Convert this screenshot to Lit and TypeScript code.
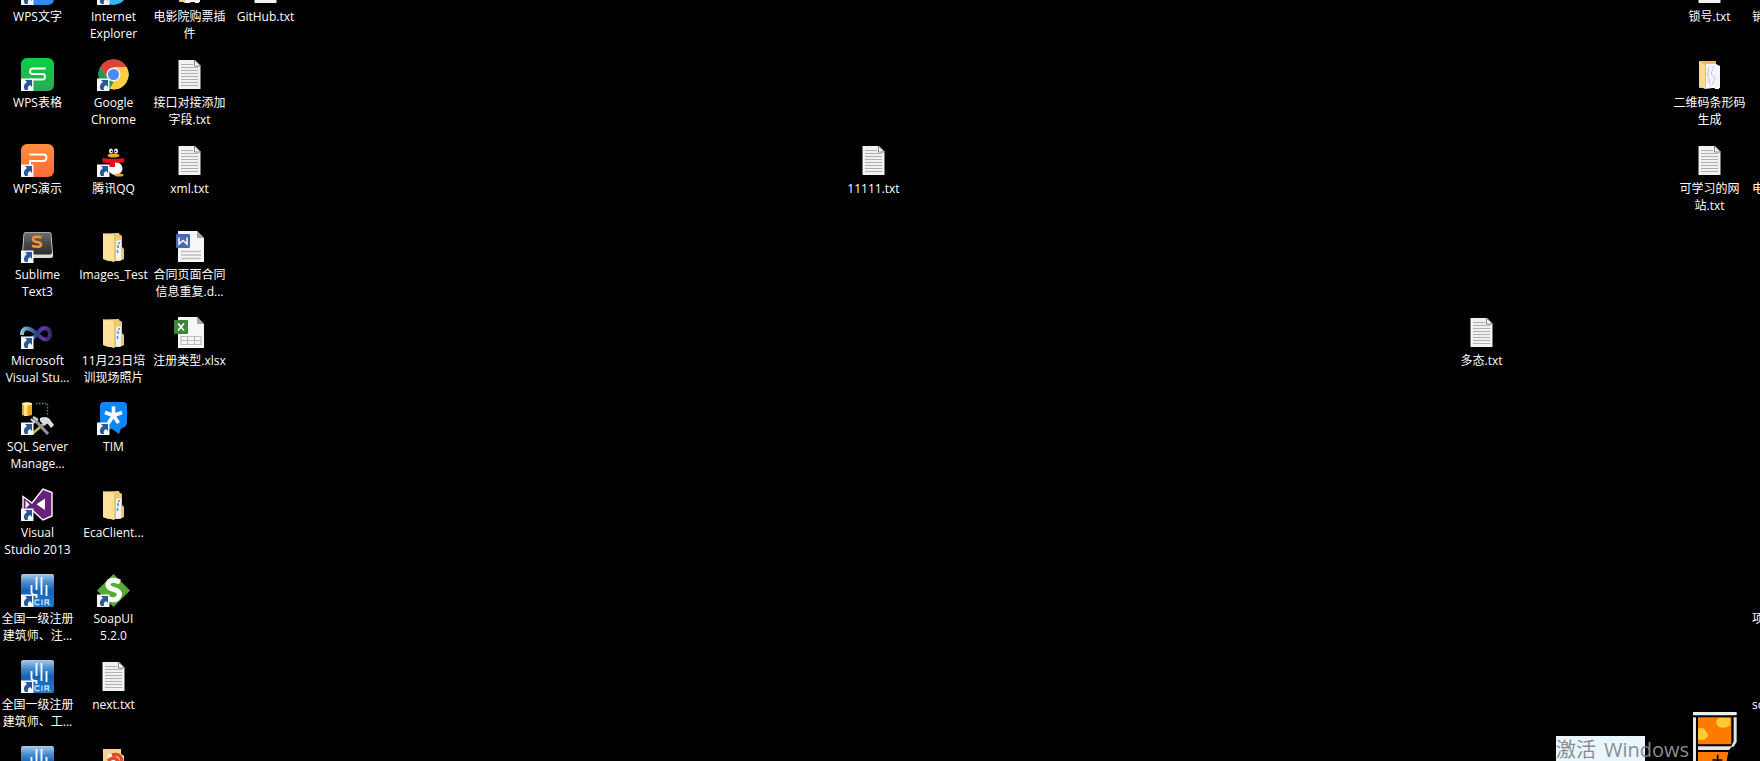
import { LitElement, html, svg, css } from "lit";
import { customElement, property } from "lit/decorators.js";
import { classMap } from "lit/directives/class-map.js";

interface Item {
  col: number;
  row: number;
  icon: string;
  lines: string[];
  shortcut?: boolean;
}

const item = (col: number, row: number, icon: string, lines: string, shortcut = false): Item => ({
  col,
  row,
  icon,
  lines: lines ? lines.split("|") : [],
  shortcut,
});

const LAST_COL = 24;

const ITEMS: Item[] = [
  item(1, 1, "writer", "WPS文字", true),
  item(1, 2, "sheets", "WPS表格", true),
  item(1, 3, "slides", "WPS演示", true),
  item(1, 4, "sublime", "Sublime|Text3", true),
  item(1, 5, "infinity", "Microsoft|Visual Stu...", true),
  item(1, 6, "sql", "SQL Server|Manage...", true),
  item(1, 7, "vs", "Visual|Studio 2013", true),
  item(1, 8, "cir", "全国一级注册|建筑师、注...", true),
  item(1, 9, "cir", "全国一级注册|建筑师、工...", true),
  item(1, 10, "cir", "", true),
  item(2, 1, "ie", "Internet|Explorer", true),
  item(2, 2, "chrome", "Google|Chrome", true),
  item(2, 3, "qq", "腾讯QQ", true),
  item(2, 4, "folder", "Images_Test"),
  item(2, 5, "folder", "11月23日培|训现场照片"),
  item(2, 6, "tim", "TIM", true),
  item(2, 7, "folder", "EcaClient..."),
  item(2, 8, "soap", "SoapUI|5.2.0", true),
  item(2, 9, "txt", "next.txt"),
  item(2, 10, "folderRed", ""),
  item(3, 1, "papers", "电影院购票插|件"),
  item(3, 2, "txt", "接口对接添加|字段.txt"),
  item(3, 3, "txt", "xml.txt"),
  item(3, 4, "word", "合同页面合同|信息重复.d..."),
  item(3, 5, "excel", "注册类型.xlsx"),
  item(4, 1, "txt", "GitHub.txt"),
  item(12, 3, "txt", "11111.txt"),
  item(20, 5, "txt", "多态.txt"),
  item(23, 1, "txt", "锁号.txt"),
  item(23, 2, "papers", "二维码条形码|生成"),
  item(23, 3, "txt", "可学习的网|站.txt"),
  item(LAST_COL, 1, "txt", "销"),
  item(LAST_COL, 3, "txt", "电"),
  item(LAST_COL, 8, "folder", "项"),
  item(LAST_COL, 9, "txt", "so"),
];

const ICONS: Record<string, unknown> = {
  writer: svg`<rect width="33" height="33" rx="6" fill="#2f8df5"/>`,
  sheets: svg`
    <defs><linearGradient id="g" x2="0" y2="1"><stop stop-color="#06d343"/><stop offset="1" stop-color="#2fa855"/></linearGradient></defs>
    <rect width="33" height="33" rx="6" fill="url(#g)"/>
    <path d="M24 10.500H12Q9 10.500 9 13.500Q9 16 12 16H21.500Q24 16 24 19Q24 21.500 21.500 21.500H9" fill="none" stroke="#fff" stroke-width="1.900" stroke-linecap="round"/>`,
  slides: svg`
    <defs><linearGradient id="g" x2="0" y2="1"><stop stop-color="#ff8f3f"/><stop offset="1" stop-color="#ff6a35"/></linearGradient></defs>
    <rect width="33" height="33" rx="6" fill="url(#g)"/>
    <path d="M9 10.500H22Q25.500 10.500 25.500 13.700Q25.500 17 22 17H9V22" fill="none" stroke="#fff" stroke-width="1.900" stroke-linecap="round"/>`,
  sublime: svg`
    <defs><linearGradient id="g" x2="0" y2="1"><stop stop-color="#6e6e6e"/><stop offset=".5" stop-color="#4a4a4a"/><stop offset="1" stop-color="#2c2c2c"/></linearGradient></defs>
    <path d="M5 2H28Q30 2 30.500 4L32 24V26Q32 28 30 28H4Q1 28 1 26V24L2.500 4Q3 2 5 2Z" fill="#dcdcdc"/>
    <path d="M5 2.600H28Q29.500 2.600 29.700 4L31 22Q31 24.500 29 24.500H4Q2 24.500 2 22L3.300 4Q3.500 2.600 5 2.600Z" fill="url(#g)"/>
    <path d="M20.500 7.500Q12.500 5.500 12 9Q11.700 11.500 16 12Q20.500 12.700 20 15Q19 18 11 16" fill="none" stroke="#f7972b" stroke-width="2.600"/>`,
  infinity: svg`
    <defs><linearGradient id="g"><stop stop-color="#8fc0da"/><stop offset=".35" stop-color="#3a6aa8"/><stop offset=".55" stop-color="#273f86"/><stop offset=".75" stop-color="#6a35c0"/><stop offset="1" stop-color="#3d2760"/></linearGradient></defs>
    <path d="M1 19C1 11 8 11 13 15.500L20 21.500C26 26 29.500 22 29 17.500C28.500 11.500 22.500 10 18 15.500L13 21C9 25 5 25 2 22" fill="none" stroke="url(#g)" stroke-width="4"/>`,
  sql: svg`
    <path d="M1 1.500Q6-.5 11 1.500V13Q6 15 1 13Z" fill="#e9a820"/><path d="M3 1H6.500V14H3Z" fill="#ffe591"/><ellipse cx="6" cy="1.700" rx="5" ry="1.500" fill="#fff0b8"/>
    <path d="M15 1.500H26.500V14" fill="none" stroke="#3f9a3f" stroke-width="1.400" stroke-dasharray="1.500 1.500"/>
    <path d="M25 20L11 32" stroke="#d7b044" stroke-width="2.600"/>
    <path d="M13 17L27 32" stroke="#8f969c" stroke-width="3"/>
    <path d="M10 17L14 21M12 15L17 18" stroke="#cfd3d6" stroke-width="2.200"/>
    <path d="M19 16Q27 13 30 19L33 23L30 26L27 22Q25 21 24 24L19 19Z" fill="#d8dcdf"/>`,
  vs: svg`
    <path d="M2 8.500L11 15L22 1L31 4.500V28L22 32L11 22L2 27Z" fill="#68217a" stroke="#fff" stroke-width="1.400"/>
    <path d="M24 10.500V22L15.500 16.300ZM4.500 12.500L8.500 16.500L4.500 20.500Z" fill="#fff"/>`,
  cir: svg`
    <defs><linearGradient id="g" x2="0" y2="1"><stop stop-color="#a8cceb"/><stop offset=".25" stop-color="#4a8dcf"/><stop offset=".5" stop-color="#1262b8"/><stop offset="1" stop-color="#2a7acb"/></linearGradient></defs>
    <rect width="33" height="33" rx="2" fill="url(#g)"/>
    <path d="M15.500 3V16M20.500 3V21M10.500 11V18Q10.500 21 15.500 21V24M25.500 11V22" fill="none" stroke="#f2f8ff" stroke-width="1.900"/>
    <path d="M18.500 26H15Q14 26 14 27.500V29Q14 30.500 15 30.500H18.500M21 25.500V31M24 31V26H27.500V28.500H24M26 28.500L28.500 31" fill="none" stroke="#b9dcff" stroke-width="1.300"/>`,
  ie: svg`<circle cx="16" cy="18" r="15" fill="#3bb4f0"/><circle cx="16" cy="17" r="7" fill="#d9f3ff"/>`,
  chrome: svg`
    <circle cx="16.500" cy="16.500" r="15" fill="#ffcd40"/>
    <path d="M3.500 9A15 15 0 0 1 29.500 9H16.500V16.500L10 20Z" fill="#db4437"/>
    <path d="M3.500 9L10 20.200L16.500 24L12.700 31A15 15 0 0 1 3.500 9Z" fill="#0f9d58"/>
    <path d="M16.500 9H29.500A15 15 0 0 1 16.500 31.500L23 20.500Z" fill="#ffcd40"/>
    <circle cx="16.500" cy="16.500" r="7" fill="#f4f4f4"/><circle cx="16.500" cy="16.500" r="5.500" fill="#4c8bf5"/>`,
  qq: svg`
    <ellipse cx="18.500" cy="24.500" rx="7" ry="6.500" fill="#fff"/>
    <ellipse cx="14" cy="7" rx="2" ry="2.600" fill="#fff"/><ellipse cx="19" cy="7" rx="2" ry="2.600" fill="#fff"/>
    <circle cx="14.600" cy="7.300" r=".9"/><circle cx="18.500" cy="7.300" r=".9"/>
    <ellipse cx="16.500" cy="11.500" rx="6" ry="2" fill="#f6a81c"/>
    <path d="M5.500 14Q16 16 27 14L27.500 18Q23 19 18 18.500V23H12L13 19Q8 19 5.500 18Z" fill="#e5121a"/>
    <ellipse cx="22" cy="31" rx="4.500" ry="1.500" fill="#f6a81c"/>`,
  folder: svg`
    <path d="M6 3.500L22 3V31H11L6 29Z" fill="#f0cd72"/>
    <path d="M22 4L25 6V17L27 19V29L23 31H18Z" fill="#ecc871"/>
    <path d="M19 11L24 10V30L18 31Z" fill="#eef3f6"/><path d="M21 15V18M20.500 20V23M22 12V14" stroke="#4d93b8" stroke-width="1.500"/>
    <path d="M6 3.500L17 5V32L6 29Z" fill="#fbe19a"/>
    <path d="M17 5L19 4.500V30L17 32Z" fill="#e8c46c"/>`,
  folderRed: svg`
    <path d="M6 3H24V31H6Z" fill="#f0d68c"/><path d="M11 8H24L27 10V31H11Z" fill="#faf3ee"/>
    <path d="M15 9Q24 7 25 15M11 15Q17 9 21 15Q18 17 15 22" fill="none" stroke="#df4a25" stroke-width="3.500"/>`,
  papers: svg`
    <path d="M6 3H23V30H6Z" fill="#e9bd60"/>
    <path d="M13 6H23L27 8V30H13Z" fill="#f2f4f7"/><path d="M16 9L14.500 17L17 26M21 8L18 16L22 20L19 28" fill="none" stroke="#c3cad6" stroke-width="1"/>
    <path d="M6 3L12 7V31L6 28Z" fill="#fbdc8e"/>
    <path d="M12 31L14 24L17 31L20 26L22 31H26V29Z" fill="#fff"/>`,
  txt: svg`
    <path d="M5.500 2H22L27.500 7.500V31H5.500Z" fill="#f1f1f1"/><path d="M21.500 2V8H27.500Z" fill="#fff" stroke="#777" stroke-width=".9"/>
    <path d="M8 6.500H20M8 9.500H25M8 12.500H25M8 15.500H25M8 18.500H25M8 21.500H25M8 24.500H25M8 27.500H25" stroke="#b0b0b0" stroke-width="1"/>`,
  word: svg`
    <path d="M5 1H24L31 8V32H5Z" fill="#f6f6f6"/><path d="M24 1V8H31Z" fill="#a7a7a7"/>
    <path d="M8 21.500H28M8 25H28M8 28.500H28" stroke="#bfbfbf" stroke-width="1.300"/>
    <rect x="3" y="4" width="14" height="14" rx="1" fill="#4a69b0"/>
    <path d="M6 7.500V14L10 10.500L14 14V7.500" fill="none" stroke="#fff" stroke-width="1.500"/>`,
  excel: svg`
    <path d="M5 1H24L31 8V32H5Z" fill="#f6f6f6"/><path d="M24 1V8H31Z" fill="#a7a7a7"/>
    <path d="M8 20.500H28V28.500H8ZM8 24.500H28M14.500 20.500V28.500M21.500 20.500V28.500" fill="none" stroke="#bdbdbd" stroke-width="1.200"/>
    <rect x="1" y="4" width="14" height="14" rx="1" fill="#40843a"/>
    <path d="M5 7.500L11 14.500M11 7.500L5 14.500" stroke="#fff" stroke-width="1.700"/>`,
  tim: svg`
    <path d="M7 0H26Q30 0 30 4V20Q30 25 24 26.500L22 32L15 27H7Q3 27 3 22V4Q3 0 7 0Z" fill="#0c86fb"/>
    <path d="M16.500 4.500V13.500L8 10.500M16.500 13.500L25 10.500M16.500 13.500L11.500 21M16.500 13.500L21.500 21" fill="none" stroke="#fff" stroke-width="3.600"/>`,
  soap: svg`
    <path d="M16.500 0L33 16.500L16.500 33L0 16.500Z" fill="#57ab34"/>
    <path d="M23 8Q13 3.500 11 10Q10.500 14 17 15.500Q24 17.500 22 22Q19 28.500 10 24" fill="none" stroke="#fff" stroke-width="5"/>`,
};

const ARROW = svg`
  <rect x="0" y="20.500" width="12.500" height="12.500" fill="#f5f8fb"/>
  <path d="M4 22H11V29L9 27Q6 28.500 7 32H4Q1 27.500 6 24Z" fill="#2a5797"/>`;

@customElement("desktop-icon")
class DesktopIcon extends LitElement {
  @property({ attribute: false }) item!: Item;

  static styles = css`
    :host {
      display: block;
    }
    .tile {
      display: flex;
      flex-direction: column;
      align-items: center;
      gap: 3px;
      width: 100%;
      margin: 0;
      padding: 0;
      border: 0;
      background: none;
      color: #fff;
      font: 12px/17px "Open Sans", "Noto Sans CJK SC", sans-serif;
      text-shadow: 0 1px 1px #000;
    }
    .glyph {
      display: block;
      width: 33px;
      height: 33px;
      overflow: visible;
    }
    .name {
      display: flex;
      flex-direction: column;
      align-items: center;
      white-space: nowrap;
    }
    .name.edge {
      align-self: flex-start;
      padding-left: 4px;
    }
    .line {
      display: block;
      height: 17px;
    }
  `;

  render() {
    const { icon, lines, shortcut, col } = this.item;
    return html`<button class="tile" type="button">
      <svg class="glyph" viewBox="0 0 33 33" aria-hidden="true">${ICONS[icon]}${shortcut ? ARROW : ""}</svg>
      <span class=${classMap({ name: true, edge: col === LAST_COL })}
        >${lines.map((l) => html`<span class="line">${l}</span>`)}</span
      >
    </button>`;
  }
}

@customElement("app-root")
class AppRoot extends LitElement {
  static styles = css`
    :host {
      display: block;
      position: relative;
      height: 100vh;
      overflow: hidden;
      background: #000;
    }
    .grid {
      display: grid;
      grid-template-columns: repeat(24, 75px);
      grid-auto-rows: 86px;
      column-gap: 1px;
      margin-top: -28px;
    }
    .watermark {
      position: absolute;
      right: 71px;
      bottom: 0;
      display: flex;
      gap: 8px;
      height: 25px;
      padding-top: 2px;
      box-sizing: border-box;
      color: #8a8d8f;
      font: 20px/24px "Open Sans", "Noto Sans CJK SC", sans-serif;
      white-space: nowrap;
      background: linear-gradient(#eaf6fd, #eaf6fd) left / 89px 100% no-repeat;
    }
    .mascot {
      position: absolute;
      right: 23px;
      bottom: 0;
      width: 44px;
      height: 49px;
    }
  `;

  render() {
    return html`
      <main class="grid">
        ${ITEMS.map(
          (i) => html`<desktop-icon .item=${i} style="grid-column:${i.col};grid-row:${i.row}"></desktop-icon>`
        )}
      </main>
      <div class="watermark"><span>激活</span><span>Windows</span></div>
      <svg class="mascot" viewBox="0 0 132 147" aria-hidden="true">
        <path d="M0 0H131V10H0Z" fill="#eee" />
        <path d="M0 16H9V147H0Z" fill="#e4e4e4" />
        <path d="M122 16H131V90L122 104L114 104L122 88Z" fill="#e4e4e4" />
        <path d="M15 103H118L108 114H15Z" fill="#e4e4e4" />
        <path d="M15 16H115V97H15Z" fill="#ff7a00" />
        <path d="M70 26Q76 14 92 18H112V40Q100 50 80 46Q68 40 70 26Z" fill="#ffcb2e" />
        <path d="M15 50Q34 44 40 60Q52 70 40 78Q30 88 15 82Z" fill="#ffcb2e" />
        <path d="M15 120H106L101 147H15Z" fill="#ff7a00" />
        <path d="M74 128V147M58 144H88" stroke="#000" stroke-width="5" />
      </svg>
    `;
  }
}
